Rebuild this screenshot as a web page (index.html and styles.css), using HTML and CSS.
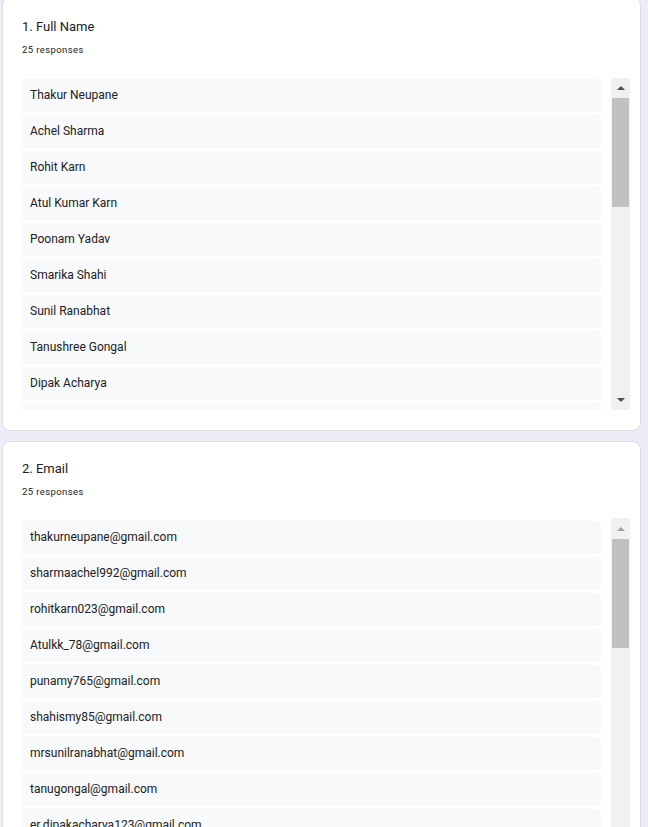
FILE: index.html
```html
<!DOCTYPE html>
<html>
<head>
<meta charset="utf-8">
<link rel="stylesheet" href="styles.css">
</head>
<body>
<div class="page">
  <section class="card card-first">
    <h2 class="q-title">1. Full Name</h2>
    <div class="q-count">25 responses</div>
    <div class="list-wrap">
      <div class="list">
        <div class="item">Thakur Neupane</div>
        <div class="item">Achel Sharma</div>
        <div class="item">Rohit Karn</div>
        <div class="item">Atul Kumar Karn</div>
        <div class="item">Poonam Yadav</div>
        <div class="item">Smarika Shahi</div>
        <div class="item">Sunil Ranabhat</div>
        <div class="item">Tanushree Gongal</div>
        <div class="item">Dipak Acharya</div>
        <div class="item">&nbsp;</div>
      </div>
      <div class="scrollbar">
        <div class="sb-btn"><span class="tri-up dark"></span></div>
        <div class="sb-thumb"></div>
        <div class="sb-fill"></div>
        <div class="sb-btn"><span class="tri-down"></span></div>
      </div>
    </div>
  </section>
  <section class="card card-second">
    <h2 class="q-title">2. Email</h2>
    <div class="q-count">25 responses</div>
    <div class="list-wrap tall">
      <div class="list">
        <div class="item">thakurneupane@gmail.com</div>
        <div class="item">sharmaachel992@gmail.com</div>
        <div class="item">rohitkarn023@gmail.com</div>
        <div class="item">Atulkk_78@gmail.com</div>
        <div class="item">punamy765@gmail.com</div>
        <div class="item">shahismy85@gmail.com</div>
        <div class="item">mrsunilranabhat@gmail.com</div>
        <div class="item">tanugongal@gmail.com</div>
        <div class="item">er.dipakacharya123@gmail.com</div>
        <div class="item">&nbsp;</div>
      </div>
      <div class="scrollbar">
        <div class="sb-btn tall-btn"><span class="tri-up light"></span></div>
        <div class="sb-thumb"></div>
        <div class="sb-fill"></div>
      </div>
    </div>
  </section>
</div>
</body>
</html>
```
FILE: styles.css
```css
html, body {
  margin: 0;
  padding: 0;
  background: #f0ebf8;
  font-family: Roboto, "Liberation Sans", Arial, sans-serif;
  color: #202124;
  overflow: hidden;
}
.page {
  padding: 0 7px 0 2px;
  display: flex;
  flex-direction: column;
  gap: 10px;
}
.card {
  background: #fff;
  border: 1px solid #dadce0;
  border-radius: 8px;
  padding: 20px 10px 20px 19px;
}
.card-first {
  margin-top: -3px;
}
.card-second {
  padding-top: 18px;
}
.q-title {
  margin: 0;
  font-size: 13px;
  font-weight: 400;
  line-height: 18px;
  color: #202124;
}
.q-count {
  margin-top: 8px;
  font-size: 9.5px;
  line-height: 12px;
  color: #202124;
  letter-spacing: 0.4px;
}
.card-second .q-count {
  margin-top: 8px;
}
.list-wrap {
  margin-top: 22px;
  height: 332px;
  display: flex;
  gap: 10px;
  overflow: hidden;
}
.list-wrap.tall {
  margin-top: 20px;
  height: 340px;
}
.list {
  flex: 1;
  display: flex;
  flex-direction: column;
  gap: 3px;
  padding-top: 1px;
  overflow: hidden;
}
.list-wrap.tall .list {
  padding-top: 3px;
}
.item {
  flex: 0 0 auto;
  height: 33px;
  line-height: 33px;
  background: #f8f9fa;
  border-radius: 3px;
  padding-left: 8px;
  font-size: 12px;
  color: #202124;
}
.scrollbar {
  width: 19px;
  background: #f1f1f1;
  display: flex;
  flex-direction: column;
  align-items: center;
}
.sb-btn {
  height: 20px;
  width: 19px;
  display: flex;
  align-items: center;
  justify-content: center;
  flex: 0 0 auto;
}
.sb-btn.tall-btn {
  height: 21px;
}
.sb-thumb {
  width: 17px;
  height: 109px;
  background: #c1c1c1;
  flex: 0 0 auto;
}
.sb-fill {
  flex: 1;
}
.tri-up {
  width: 0;
  height: 0;
  border-left: 4px solid transparent;
  border-right: 4px solid transparent;
  border-bottom: 4px solid #505050;
}
.tri-up.light {
  border-bottom-color: #a3a3a3;
}
.tri-down {
  width: 0;
  height: 0;
  border-left: 4px solid transparent;
  border-right: 4px solid transparent;
  border-top: 4px solid #505050;
}
```
